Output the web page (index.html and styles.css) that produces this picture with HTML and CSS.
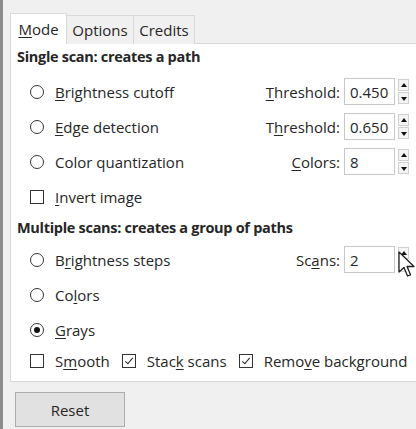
FILE: index.html
```html
<!DOCTYPE html>
<html>
<head>
<meta charset="utf-8">
<link rel="stylesheet" href="styles.css">
</head>
<body>
<div class="window">
  <div class="tabs">
    <div class="tab active"><u>M</u>ode</div>
    <div class="tab">Options</div>
    <div class="tab">Credits</div>
  </div>
  <div class="panel">
    <div class="title">Single scan: creates a path</div>
    <div class="rows first">
      <div class="row">
        <span class="radio"></span><span class="label"><u>B</u>rightness cutoff</span>
        <div class="ctrl"><span class="clabel"><u>T</u>hreshold:</span><div class="spin"><span class="val">0.450</span></div><div class="arrows"><span class="up"></span><span class="down"></span></div></div>
      </div>
      <div class="row">
        <span class="radio"></span><span class="label"><u>E</u>dge detection</span>
        <div class="ctrl"><span class="clabel">T<u>h</u>reshold:</span><div class="spin"><span class="val">0.650</span></div><div class="arrows"><span class="up"></span><span class="down"></span></div></div>
      </div>
      <div class="row">
        <span class="radio"></span><span class="label">Color quantization</span>
        <div class="ctrl"><span class="clabel"><u>C</u>olors:</span><div class="spin"><span class="val">8</span></div><div class="arrows"><span class="up"></span><span class="down"></span></div></div>
      </div>
      <div class="row">
        <span class="check"></span><span class="label"><u>I</u>nvert image</span>
      </div>
    </div>
    <div class="title second">Multiple scans: creates a group of paths</div>
    <div class="rows second-rows">
      <div class="row">
        <span class="radio"></span><span class="label">B<u>r</u>ightness steps</span>
        <div class="ctrl"><span class="clabel">Sc<u>a</u>ns:</span><div class="spin"><span class="val">2</span></div><div class="arrows"><span class="up"></span><span class="down"></span>
          <svg class="cursor" width="18" height="28" viewBox="0 0 18 28"><path d="M1 1 L1 21 L6 16.5 L9.5 25 L12.5 23.8 L9 15.5 L16 15.5 Z" fill="#fff" stroke="#222" stroke-width="1.3" stroke-linejoin="round"/></svg>
        </div></div>
      </div>
      <div class="row">
        <span class="radio"></span><span class="label">Co<u>l</u>ors</span>
      </div>
      <div class="row">
        <span class="radio on"></span><span class="label"><u>G</u>rays</span>
      </div>
      <div class="row last">
        <span class="check"></span><span class="label">S<u>m</u>ooth</span>
        <span class="check on gap"></span><span class="label">Stac<u>k</u> scans</span>
        <span class="check on gap"></span><span class="label">Remo<u>v</u>e background</span>
      </div>
    </div>
  </div>
  <div class="footer">
    <div class="button">Reset</div>
  </div>
</div>
</body>
</html>
```

FILE: styles.css
```css
html, body {
  margin: 0;
  padding: 0;
  background: #f0f0f0;
}
body {
  font-family: "Open Sans", "Noto Sans", sans-serif;
  font-size: 15px;
  color: #262626;
  width: 416px;
  height: 429px;
  overflow: hidden;
}
u {
  text-decoration: underline;
  text-underline-offset: 2px;
}
.window {
  height: 429px;
  border-left: 3px solid #8c8c8c;
  padding: 13px 0 0 7px;
  box-sizing: border-box;
  background: #f0f0f0;
}
.tabs {
  display: flex;
  align-items: flex-end;
  height: 31px;
  position: relative;
  z-index: 1;
  margin-bottom: -1px;
}
.tab {
  height: 29px;
  box-sizing: border-box;
  border: 1px solid #d9d9d9;
  border-bottom: none;
  background: #f0f0f0;
  display: flex;
  align-items: center;
  justify-content: center;
  margin-left: -1px;
}
.tab:nth-child(1) { width: 57px; margin-left: 0; }
.tab:nth-child(2) { width: 68px; }
.tab:nth-child(3) { width: 62px; }
.tab.active {
  background: #fff;
  height: 31px;
}
.panel {
  background: #fff;
  border: 1px solid #d9d9d9;
  border-right: none;
  height: 339px;
  box-sizing: border-box;
  padding: 1px 0 0 6px;
}
.title {
  font-weight: 700;
  font-size: 14.5px;
  height: 24px;
  line-height: 24px;
  letter-spacing: -0.3px;
}
.rows.first {
  margin-top: 5px;
}
.title.second {
  height: 27px;
  line-height: 27px;
}
.rows.second-rows {
  margin-top: 1px;
}
.row {
  height: 35px;
  display: flex;
  align-items: center;
  padding-left: 13px;
  padding-right: 7px;
}
.row.last {
  height: 28px;
}
.radio {
  width: 14px;
  height: 14px;
  box-sizing: border-box;
  border: 1px solid #333;
  border-radius: 50%;
  flex: none;
  position: relative;
  background: #fff;
}
.radio.on::after {
  content: "";
  position: absolute;
  left: 3px;
  top: 3px;
  width: 6px;
  height: 6px;
  border-radius: 50%;
  background: #111;
}
.check {
  width: 14px;
  height: 14px;
  box-sizing: border-box;
  border: 1px solid #333;
  flex: none;
  position: relative;
  background: #fff;
}
.check.on::after {
  content: "";
  position: absolute;
  left: 4px;
  top: 1px;
  width: 3px;
  height: 7px;
  border-right: 1.5px solid #222;
  border-bottom: 1.5px solid #222;
  transform: rotate(40deg);
}
.check.gap {
  margin-left: 12px;
}
.label {
  margin-left: 11px;
}
.ctrl {
  margin-left: auto;
  display: flex;
  align-items: center;
}
.clabel {
  margin-right: 4px;
}
.spin {
  width: 51px;
  height: 27px;
  box-sizing: border-box;
  border: 1px solid #c8c8c8;
  background: #fff;
  display: flex;
  align-items: center;
  padding-left: 5px;
}
.arrows {
  margin-left: 3px;
  width: 11px;
  height: 25px;
  display: flex;
  flex-direction: column;
  justify-content: space-between;
  position: relative;
}
.arrows span {
  height: 12px;
  box-sizing: border-box;
  border: 1px solid #cfcfcf;
  background: #f4f4f4;
  position: relative;
}
.arrows .up::after,
.arrows .down::after {
  content: "";
  position: absolute;
  left: 1.5px;
  border-left: 3px solid transparent;
  border-right: 3px solid transparent;
}
.arrows .up::after {
  top: 3px;
  border-bottom: 4px solid #111;
}
.arrows .down::after {
  top: 3.5px;
  border-top: 4px solid #111;
}
.cursor {
  position: absolute;
  left: 0;
  top: 4px;
}
.footer {
  padding: 10px 0 0 5px;
}
.button {
  width: 110px;
  height: 35px;
  box-sizing: border-box;
  border: 1px solid #adadad;
  background: #e1e1e1;
  display: flex;
  align-items: center;
  justify-content: center;
}
```
